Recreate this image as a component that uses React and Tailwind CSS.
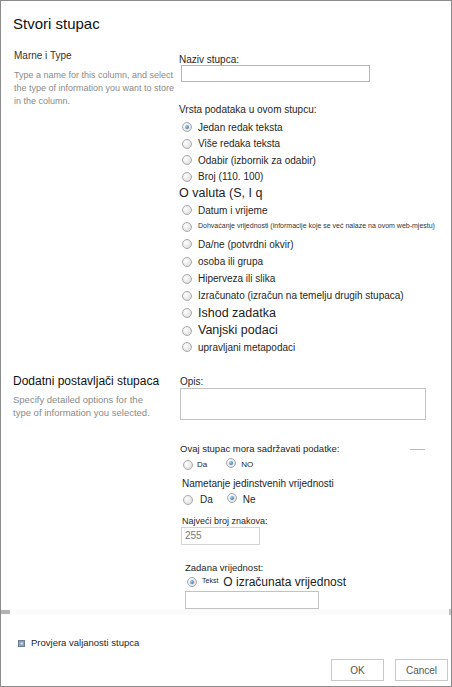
import React from 'react'

const font = { fontFamily: '"Liberation Sans", Arial, sans-serif' }

function Radio({ checked }) {
  return (
    <span className="relative inline-block w-[10px] h-[10px] shrink-0 rounded-full border border-[#a9a9a9] bg-[radial-gradient(circle_at_35%_35%,#ffffff,#d6d6d6)]">
      {checked && (
        <span className="absolute left-[2px] top-[2px] w-[4px] h-[4px] rounded-full bg-[radial-gradient(circle_at_35%_35%,#9fd0f5,#1f5f9a)]" />
      )}
    </span>
  )
}

const types = [
  { label: 'Jedan redak teksta', h: 'h-[16px]', checked: true },
  { label: 'Više redaka teksta', h: 'h-[17px]' },
  { label: 'Odabir (izbornik za odabir)', h: 'h-[16px]' },
  { label: 'Broj (110. 100)', h: 'h-[17px]' },
  { label: 'O valuta (S, I q', h: 'h-[17px]', noRadio: true, big: true },
  { label: 'Datum i vrijeme', h: 'h-[16px]' },
  { label: 'Dohvaćanje vrijednosti (informacije koje se već nalaze na ovom web-mjestu)', h: 'h-[17px]', tiny: true },
  { label: 'Da/ne (potvrdni okvir)', h: 'h-[18px]' },
  { label: 'osoba ili grupa', h: 'h-[17px]' },
  { label: 'Hiperveza ili slika', h: 'h-[17px]' },
  { label: 'Izračunato (izračun na temelju drugih stupaca)', h: 'h-[17px]' },
  { label: 'Ishod zadatka', h: 'h-[18px]', big: true },
  { label: 'Vanjski podaci', h: 'h-[17px]', big: true },
  { label: 'upravljani metapodaci', h: 'h-[16px]' },
]

export default function App() {
  return (
    <div style={font} className="w-[452px] h-[687px] bg-white border border-[#8c8c8c] flex flex-col overflow-hidden text-[#262626]">
      <div className="pl-[12px] pt-[12px] h-[46px] text-[15px] text-[#111]">Stvori stupac</div>

      <div className="flex flex-col">
        {/* name & type */}
        <div className="flex">
          <div className="w-[178px] shrink-0 pl-[13px]">
            <div className="text-[10px] text-[#333] mt-[1px]">Marne i Type</div>
            <div className="w-[164px] text-[9px] leading-[13px] text-[#8a8a8a] mt-[6px]">
              Type a name for this column, and select the type of information you want to store in the column.
            </div>
          </div>
          <div className="flex-1">
            <div className="text-[10px] mt-[7px] h-[11px] leading-[11px] whitespace-nowrap">Naziv stupca:</div>
            <div className="ml-[2px] w-[189px] h-[17px] border border-[#b5b5b5]" />
            <div className="text-[10px] mt-[20px] h-[17px] whitespace-nowrap">Vrsta podataka u ovom stupcu:</div>
            <div className="flex flex-col">
              {types.map((t) => (
                <div key={t.label} className={`${t.h} flex items-center whitespace-nowrap ${t.noRadio ? '' : 'pl-[3px]'}`}>
                  {!t.noRadio && <Radio checked={t.checked} />}
                  <span
                    className={
                      t.big
                        ? 'text-[12.5px] text-[#222] ' + (t.noRadio ? '' : 'ml-[6px]')
                        : t.tiny
                        ? 'text-[7px] ml-[6px] text-[#333]'
                        : 'text-[10px] ml-[6px] text-[#262626]'
                    }
                  >
                    {t.label}
                  </span>
                </div>
              ))}
            </div>
          </div>
        </div>

        {/* additional settings */}
        <div className="flex mt-[16px]">
          <div className="w-[178px] shrink-0 pl-[12px] pr-1">
            <div className="text-[12px] text-[#111] whitespace-nowrap mt-[1px]">Dodatni postavljači stupaca</div>
            <div className="text-[9.5px] leading-[13px] text-[#8a8a8a] mt-[3px] pr-[14px]">
              Specify detailed options for the type of information you selected.
            </div>
          </div>
          <div className="flex-1">
            <div className="text-[10px] h-[14px] mt-[3px] pl-[1px]">Opis:</div>
            <div className="ml-[1px] w-[246px] h-[32px] border border-[#c2c2c2]" />

            <div className="flex items-center mt-[22px] h-[14px] whitespace-nowrap">
              <span className="text-[9.5px] pl-[1px]">Ovaj stupac mora sadržavati podatke:</span>
              <span className="ml-[71px] w-[15px] h-px bg-[#bbb]" />
            </div>
            <div className="flex items-center h-[16px] mt-[1px] pl-[4px] text-[8px]">
              <Radio />
              <span className="ml-[4px]">Da</span>
              <span className="ml-[19px]"><Radio checked /></span>
              <span className="ml-[5px]">NO</span>
            </div>

            <div className="text-[10px] mt-[3px] h-[15px] pl-[3px] whitespace-nowrap">Nametanje jedinstvenih vrijednosti</div>
            <div className="flex items-center h-[17px] pl-[4px] text-[10px]">
              <Radio />
              <span className="ml-[7px]">Da</span>
              <span className="ml-[14px]"><Radio checked /></span>
              <span className="ml-[6px]">Ne</span>
            </div>

            <div className="text-[9px] mt-[7px] h-[12px] pl-[3px] whitespace-nowrap">Najveći broj znakova:</div>
            <div className="ml-[2px] w-[79px] h-[18px] border border-[#d4d4d4] text-[10px] text-[#777] pl-[3px] leading-[16px]">255</div>

            <div className="ml-[6px] text-[9.5px] mt-[16px] h-[12px] whitespace-nowrap">Zadana vrijednost:</div>
            <div className="ml-[8px] flex items-center h-[16px] mt-[1px] whitespace-nowrap">
              <Radio checked />
              <span className="ml-[5px] text-[7px] self-start mt-[2px]">Tekst</span>
              <span className="ml-[5px] text-[12px] text-[#222]">O izračunata vrijednost</span>
            </div>
            <div className="ml-[6px] mt-[1px] w-[134px] h-[18px] border border-[#c2c2c2]" />
          </div>
        </div>

        {/* scrollbar strip */}
        <div className="h-[6px] bg-[#fbfbfb] flex items-center justify-between">
          <span className="w-[9px] h-[4px] bg-[#b3b3b3]" />
          <span className="w-[2px] h-[6px] bg-[#c4c4c4]" />
        </div>
      </div>

      {/* footer */}
      <div className="flex-1 relative">
        <div className="flex items-center pl-[17px] pt-[21px] text-[9.5px] whitespace-nowrap">
          <span className="w-[7px] h-[7px] bg-[#8fa3b8] border border-[#6d7f93] flex items-center justify-center text-[6px] leading-none text-white">+</span>
          <span className="ml-[6px]">Provjera valjanosti stupca</span>
        </div>
        <div className="absolute right-[3px] bottom-[5px] flex gap-[11px]">
          <button className="w-[53px] h-[22px] border border-[#c8c8c8] bg-white text-[10px] text-[#555]">OK</button>
          <button className="w-[53px] h-[22px] border border-[#c8c8c8] bg-white text-[10px] text-[#555]">Cancel</button>
        </div>
      </div>
    </div>
  )
}
